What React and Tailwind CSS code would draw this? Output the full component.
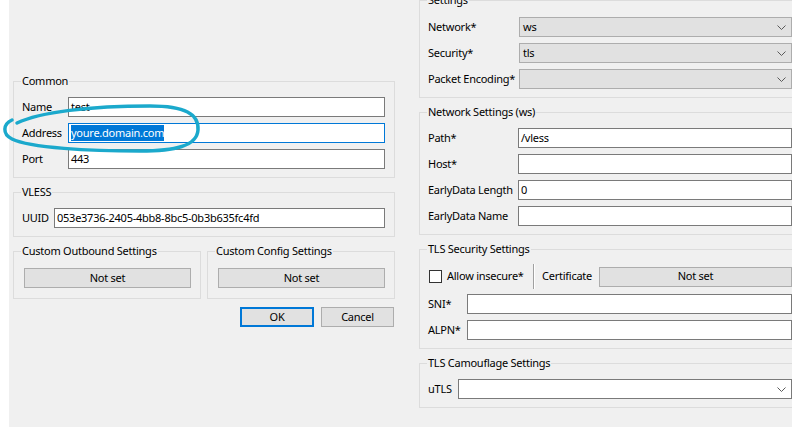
import React from 'react'

function Group({ title, className = '', legendClass = '-ml-[1px]', children }) {
  return (
    <fieldset className={`border border-[#dcdcdc] ${className}`}>
      <legend className={`px-[1px] leading-[16px] ${legendClass}`}>{title}</legend>
      {children}
    </fieldset>
  )
}

function TextBox({ children, focused }) {
  return (
    <div
      className={`h-[20px] flex-1 flex items-center bg-white px-[2px] whitespace-nowrap overflow-hidden border ${
        focused ? 'border-[#0078d7]' : 'border-[#7a7a7a]'
      }`}
    >
      {children}
    </div>
  )
}

function Chevron() {
  return (
    <svg width="9" height="5" viewBox="0 0 9 5" className="shrink-0">
      <path d="M0.5 0.5 L4.5 4.5 L8.5 0.5" fill="none" stroke="#5a5a5a" strokeWidth="1" />
    </svg>
  )
}

function Combo({ value, white }) {
  return (
    <div
      className={`h-[20px] flex-1 flex items-center justify-between pl-[3px] pr-[5px] border ${
        white ? 'bg-white border-[#7a7a7a]' : 'bg-[#e1e1e1] border-[#adadad]'
      }`}
    >
      <span>{value}</span>
      <Chevron />
    </div>
  )
}

function Button({ children, className = '' }) {
  return (
    <div
      className={`h-[20px] flex items-center justify-center bg-[#e1e1e1] border border-[#adadad] ${className}`}
    >
      {children}
    </div>
  )
}

function Row({ label, labelWidth, children, className = '' }) {
  return (
    <div className={`flex items-center ${className}`}>
      <div className="shrink-0 whitespace-nowrap" style={{ width: labelWidth }}>
        {label}
      </div>
      {children}
    </div>
  )
}

export default function App() {
  return (
    <div className="relative flex w-[792px] h-[427px] overflow-hidden font-['Noto_Sans',sans-serif] text-[11px] tracking-[-0.25px] text-black">
      <div className="w-[9px] shrink-0 bg-white" />
      <div className="flex flex-1 bg-[#f0f0f0] pl-[4px]">
        {/* left column */}
        <div className="w-[382px] shrink-0 pt-[73px] flex flex-col">
          <Group title="Common" className="pl-[8px] pr-[9px] pt-[8px] pb-[8px]">
            <div className="flex flex-col gap-[6px]">
              <Row label="Name" labelWidth={46}>
                <TextBox>test</TextBox>
              </Row>
              <Row label="Address" labelWidth={46}>
                <TextBox focused>
                  <span className="bg-[#0078d7] text-white">youre.domain.com</span>
                </TextBox>
              </Row>
              <Row label="Port" labelWidth={46}>
                <TextBox>443</TextBox>
              </Row>
            </div>
          </Group>

          <Group title="VLESS" className="mt-[6px] pl-[8px] pr-[9px] pt-[8px] pb-[8px]">
            <Row label="UUID" labelWidth={32}>
              <TextBox>053e3736-2405-4bb8-8bc5-0b3b635fc4fd</TextBox>
            </Row>
          </Group>

          <div className="mt-[6px] flex gap-[6px]">
            <Group
              title="Custom Outbound Settings"
              legendClass="-ml-[3px]"
              className="flex-1 pl-[10px] pr-[9px] pt-[9px] pb-[10px]"
            >
              <Button>Not set</Button>
            </Group>
            <Group
              title="Custom Config Settings"
              legendClass="-ml-[3px]"
              className="flex-1 pl-[10px] pr-[9px] pt-[9px] pb-[10px]"
            >
              <Button>Not set</Button>
            </Group>
          </div>

          <div className="mt-[8px] flex justify-end gap-[7px] pr-[1px]">
            <div className="w-[74px] h-[20px] flex items-center justify-center bg-[#e1e1e1] border-2 border-[#0078d7]">
              OK
            </div>
            <Button className="w-[73px]">Cancel</Button>
          </div>
        </div>

        {/* right column */}
        <div className="ml-[24px] w-[383px] shrink-0 -mt-[8px] flex flex-col">
          <Group title="Settings" className="pl-[8px] pr-[9px] pt-[9px] pb-[8px]">
            <div className="flex flex-col gap-[6px]">
              <Row label="Network*" labelWidth={91}>
                <Combo value="ws" />
              </Row>
              <Row label="Security*" labelWidth={91}>
                <Combo value="tls" />
              </Row>
              <Row label="Packet Encoding*" labelWidth={91}>
                <Combo value="" />
              </Row>
            </div>
          </Group>

          <Group title="Network Settings (ws)" className="mt-[6px] pl-[8px] pr-[9px] pt-[8px] pb-[8px]">
            <div className="flex flex-col gap-[6px]">
              <Row label="Path*" labelWidth={90}>
                <TextBox>/vless</TextBox>
              </Row>
              <Row label="Host*" labelWidth={90}>
                <TextBox />
              </Row>
              <Row label="EarlyData Length" labelWidth={90}>
                <TextBox>0</TextBox>
              </Row>
              <Row label="EarlyData Name" labelWidth={90}>
                <TextBox />
              </Row>
            </div>
          </Group>

          <Group title="TLS Security Settings" className="mt-[6px] pl-[8px] pr-[9px] pt-[7px] pb-[8px]">
            <div className="flex items-center h-[25px]">
              <div className="w-[105px] shrink-0 flex items-center">
                <div className="ml-[1px] w-[13px] h-[13px] border border-[#333333] bg-white" />
                <span className="ml-[5px] whitespace-nowrap">Allow insecure*</span>
              </div>
              <div className="w-[2px] h-[25px] border-l border-[#a0a0a0] border-r border-r-white shrink-0" />
              <div className="w-[64px] shrink-0 pl-[7px] whitespace-nowrap">Certificate</div>
              <Button className="flex-1">Not set</Button>
            </div>
            <div className="mt-[5px] flex flex-col gap-[6px]">
              <Row label="SNI*" labelWidth={39}>
                <TextBox />
              </Row>
              <Row label="ALPN*" labelWidth={39}>
                <TextBox />
              </Row>
            </div>
          </Group>

          <Group title="TLS Camouflage Settings" className="mt-[6px] pl-[8px] pr-[9px] pt-[8px] pb-[8px]">
            <Row label="uTLS" labelWidth={30}>
              <Combo value="" white />
            </Row>
          </Group>
        </div>
      </div>

      {/* hand-drawn highlight */}
      <svg
        className="absolute left-0 top-0 pointer-events-none"
        width="792"
        height="427"
        viewBox="0 0 792 427"
      >
        <path
          d="M17 123 C40 112 90 106 150 106 C185 106 199 114 198 130 C197 146 175 151 140 151 C90 151 30 148 12 139 C2 134 3 124 12 120"
          fill="none"
          stroke="#1ba9cc"
          strokeWidth="3.5"
          strokeLinecap="round"
        />
      </svg>
    </div>
  )
}
